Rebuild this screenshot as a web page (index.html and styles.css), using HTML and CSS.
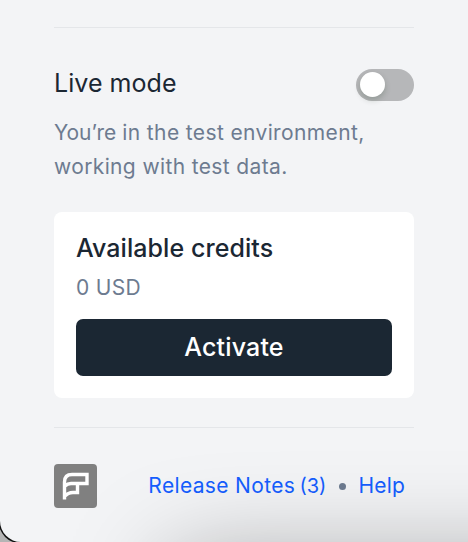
FILE: index.html
```html
<!DOCTYPE html>
<html lang="en">
<head>
<meta charset="utf-8">
<title>Account sidebar</title>
<link rel="stylesheet" href="styles.css">
</head>
<body>
<aside class="sidebar">
  <section class="mode">
    <div class="mode-row">
      <span class="mode-title">Live mode</span>
      <button class="switch" role="switch" aria-checked="false" aria-label="Live mode"><span class="knob"></span></button>
    </div>
    <p class="mode-text"><span class="contraction">You’re</span> in the test environment, working with test data.</p>
  </section>
  <section class="card">
    <h2 class="card-title">Available credits</h2>
    <p class="amount">0 USD</p>
    <button class="activate"><span>Activate</span></button>
  </section>
  <footer class="footer">
    <svg class="logo" viewBox="0 0 43 44" aria-hidden="true">
      <rect width="43" height="44" rx="4" fill="#808080"/>
      <path d="M10.500 35.500V18Q10.500 10.500 18 10.500H33V19.500H23.500V28.500H19Q14 28.500 10.500 32.500M11 22Q13.500 19.500 17 19.500H24" fill="none" stroke="#fff" stroke-width="3.400"/>
    </svg>
    <nav class="links">
      <a class="notes" href="#">Release Notes <span class="count">(3)</span></a>
      <span class="dot"></span>
      <a class="help" href="#">Help</a>
    </nav>
  </footer>
  <div class="shade"></div>
</aside>
</body>
</html>
```
FILE: styles.css
```css
* { box-sizing: border-box; }
html { background: #b5b5b5; }
body { margin: 0; font-family: Inter, "Liberation Sans", sans-serif; color: #1b2733; }
.sidebar {
  position: relative;
  height: 542px;
  padding: 27px 54px 0;
  overflow: hidden;
  background: #f3f4f6;
  border-bottom-left-radius: 21px;
  box-shadow: 0 0 0 1.500px #111;
}
.mode { border-top: 1px solid #e4e6e9; padding-top: 39px; height: 185px; }
.mode-row { display: flex; align-items: center; justify-content: space-between; height: 34px; }
.mode-title { margin-top: -2px; font-size: 25px; line-height: 34px; letter-spacing: 0.050px; }
.switch {
  width: 58px;
  height: 32px;
  padding: 3px 4px;
  margin-top: 2px;
  border: 0;
  border-radius: 16px;
  background: #b6b7b9;
}
.knob {
  display: block;
  width: 25px;
  height: 25px;
  margin-top: -1px;
  border-radius: 50%;
  background: #fff;
  box-shadow: 0 3px 6px rgba(0, 35, 11, 0.2);
}
.mode-text { margin: 15px 0 0; font-size: 21px; line-height: 34px; letter-spacing: 0.370px; color: #6d7b90; }
.contraction { letter-spacing: -0.120px; }
.card { height: 186px; padding: 19px 22px 22px; border-radius: 8px; background: #fff; }
.card-title { margin: 0; font-size: 25px; line-height: 34px; font-weight: 500; letter-spacing: 0.060px; }
.amount { margin: 8px 0 16px; font-size: 21px; line-height: 30px; letter-spacing: 0.300px; color: #6d7b90; }
.activate {
  display: block;
  width: 100%;
  height: 57px;
  padding: 0;
  border: 0;
  border-radius: 7px;
  background: #1b2733;
  color: #fff;
  font: 500 25px/57px Inter, "Liberation Sans", sans-serif;
  letter-spacing: 0.150px;
}
.footer {
  display: flex;
  align-items: flex-start;
  justify-content: space-between;
  margin-top: 29px;
  padding-top: 36px;
  border-top: 1px solid #e4e6e9;
}
.logo { width: 43px; height: 44px; }
.links { display: flex; align-items: center; height: 43px; margin-right: 9px; font-size: 21px; letter-spacing: 0.340px; }
.links a { color: #155eff; text-decoration: none; white-space: nowrap; }
.links .help { letter-spacing: 0.200px; }
.count { font-size: 20px; letter-spacing: 0; margin-left: -2px; }
.dot { width: 7px; height: 7px; margin: 2px 12px 0 13px; border-radius: 50%; background: #6d7b90; }
.shade {
  position: absolute;
  left: 180px;
  top: 572px;
  width: 600px;
  height: 200px;
  box-shadow: 0 0 100px 10px rgba(0, 0, 0, 0.35);
  pointer-events: none;
}
```
